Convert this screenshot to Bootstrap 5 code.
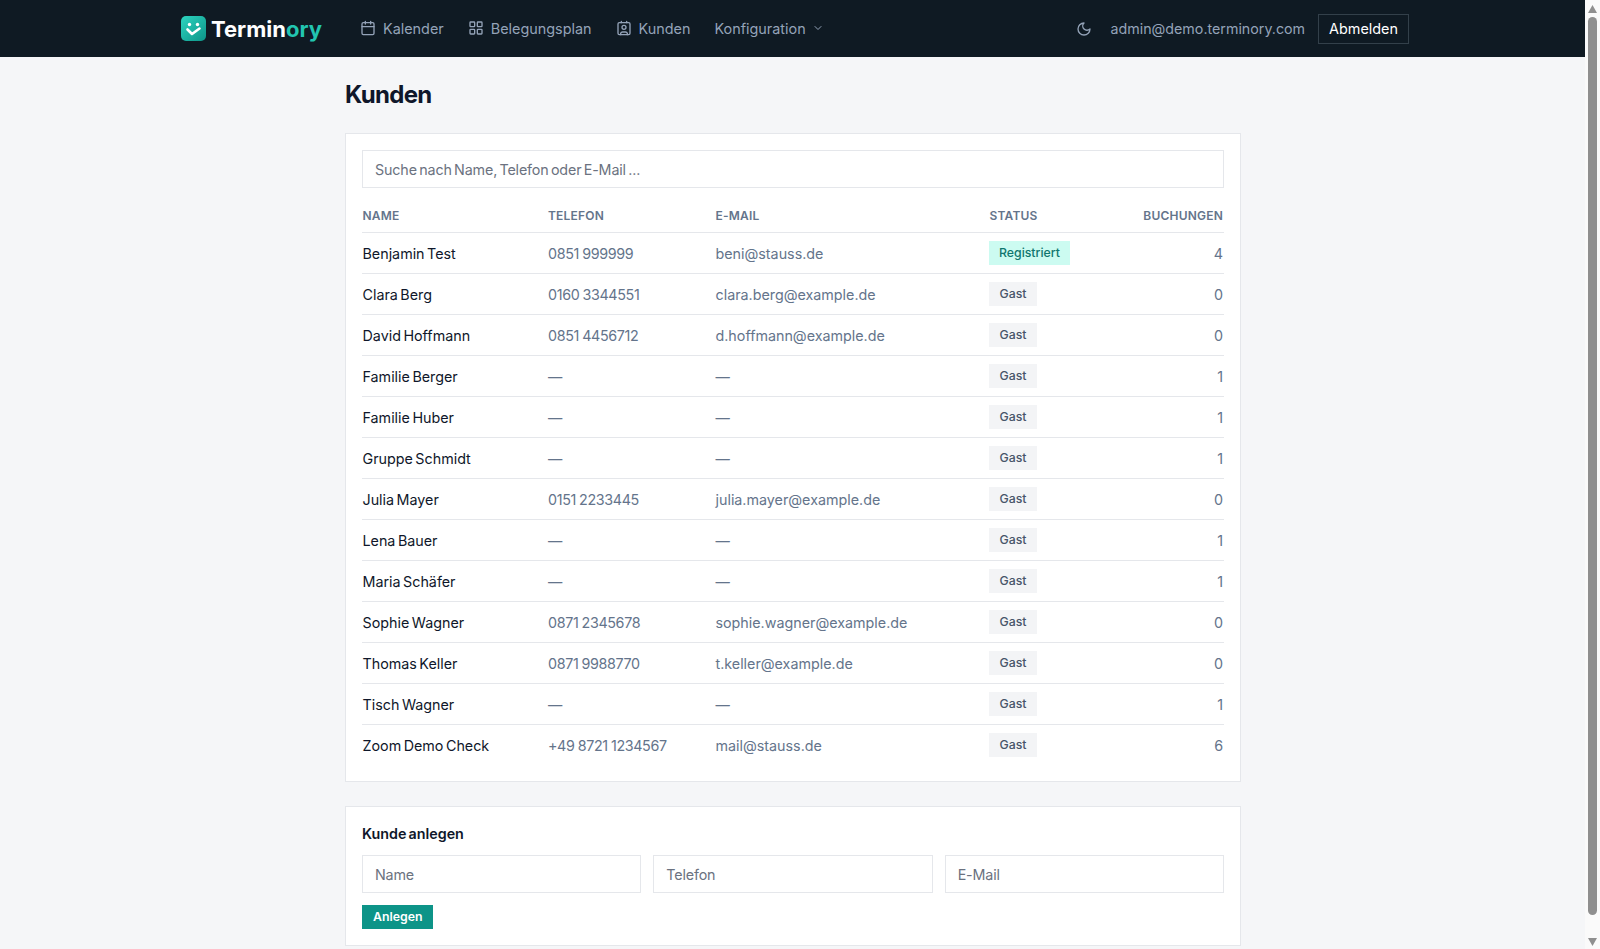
<!DOCTYPE html>
<html lang="de">

<head>
    <meta charset="UTF-8">
    <meta name="viewport" content="width=device-width, initial-scale=1.0">
    <title>Terminory - Kunden</title>
    <link href="https://cdn.jsdelivr.net/npm/bootstrap@5.3.0/dist/css/bootstrap.min.css" rel="stylesheet">
    <style>
        html {
            overflow: hidden;
        }

        body {
            background: #f5f6f8;
            color: #0f172a;
            font-family: "Inter", "Noto Sans", sans-serif;
            font-size: 14.3px;
            width: 1585px;
        }

        /* top bar */
        .topbar {
            background: #0f1a23;
            height: 57px;
            padding: 0;
            --bs-navbar-nav-link-padding-x: 0;
        }

        .topbar-inner {
            width: 1228px;
            margin-left: 181px;
        }

        .logo-word {
            font-size: 22px;
            font-weight: 700;
            color: #fff;
            text-decoration: none;
            line-height: 1;
            gap: 5px;
        }

        .logo-word span {
            color: #22c5b0;
        }

        .topnav {
            margin-left: 38px;
            gap: 24px;
        }

        .topnav .nav-link {
            color: #94a3b8;
            font-size: 14.4px;
            padding: 0;
            display: flex;
            align-items: center;
            gap: 7px;
        }

        .nav-ico {
            width: 16px;
            height: 16px;
            fill: none;
            stroke: #94a3b8;
            stroke-width: 2;
            stroke-linecap: round;
            stroke-linejoin: round;
        }

        .nav-ico.tiny {
            width: 12px;
            height: 12px;
            margin-left: -1px;
        }

        .user-mail {
            color: #94a3b8;
            font-size: 14.25px;
            margin-left: 18px;
        }

        .logout-btn {
            --bs-btn-color: #fff;
            --bs-btn-border-color: #33404a;
            --bs-btn-border-radius: 0;
            --bs-btn-padding-x: 10px;
            --bs-btn-padding-y: 0;
            --bs-btn-font-size: 14.4px;
            --bs-btn-font-weight: 400;
            height: 30px;
            margin-left: 13px;
        }

        /* page */
        .page-wrap {
            width: 896px;
            margin-left: 345px;
        }

        .page-title {
            font-size: 24px;
            font-weight: 700;
            line-height: 32px;
            margin: 22px 0 22px;
            letter-spacing: -0.7px;
        }

        .panel {
            --bs-card-border-radius: 0;
            --bs-card-inner-border-radius: 0;
            --bs-card-border-color: #e5e7eb;
            --bs-card-spacer-x: 16px;
            --bs-card-spacer-y: 16px;
            margin-bottom: 24px;
        }

        .panel .form-control {
            border-radius: 0;
            border-color: #e5e7eb;
            font-size: 14.3px;
            word-spacing: -1.5px;
            letter-spacing: -0.15px;
            height: 38px;
            padding: 0 12px;
            color: #0f172a;
        }

        .panel .form-control::placeholder {
            color: #6b7280;
        }

        .kunden-table {
            margin: 8px 0 0;
            table-layout: fixed;
            --bs-table-border-color: #e5e7eb;
        }

        .kunden-table th {
            font-size: 12px;
            font-weight: 600;
            color: #64748b;
            text-transform: uppercase;
            letter-spacing: 0.2px;
            padding: 5px 1px 0 0.5px;
            height: 36px;
            vertical-align: middle;
        }

        .kunden-table th:nth-child(2) {
            padding-left: 0;
        }

        .kunden-table td {
            height: 41px;
            padding: 3px 1px 0 0.5px;
            color: #64748b;
            vertical-align: middle;
            font-size: 14.3px;
            word-spacing: -1.5px;
        }

        .kunden-table td:nth-child(2) {
            letter-spacing: -0.35px;
            word-spacing: -0.5px;
            padding-left: 0;
        }

        .kunden-table td.state-cell {
            padding-top: 0;
            padding-left: 0;
        }

        .kunden-table tr:last-child td {
            border-bottom: 0;
            padding-top: 1px;
        }

        .kunden-table tr:last-child td.state-cell {
            padding-top: 0;
        }

        .kunden-table td.person {
            color: #0f172a;
        }

        .col-name {
            width: 186px;
        }

        .col-tel {
            width: 167px;
        }

        .col-mail {
            width: 274px;
        }

        .col-status {
            width: 120px;
        }

        .state-pill {
            display: inline-block;
            font-size: 12.3px;
            font-weight: 500;
            line-height: 24px;
            padding: 0 10.5px;
            background: #f3f4f6;
            color: #475569;
        }

        .state-pill.reg {
            padding: 0 10px;
            background: #ccfbf1;
            color: #0f766e;
        }

        .panel-title {
            font-size: 14.3px;
            font-weight: 600;
            word-spacing: -1.5px;
            line-height: 20px;
            margin: 1px 0 11px;
        }

        .add-row {
            gap: 12px;
            margin-bottom: 12px;
        }

        .add-btn {
            --bs-btn-bg: #0d9488;
            --bs-btn-color: #fff;
            --bs-btn-border-color: #0d9488;
            --bs-btn-border-radius: 0;
            --bs-btn-padding-x: 10px;
            --bs-btn-padding-y: 0;
            --bs-btn-font-size: 12.3px;
            --bs-btn-font-weight: 600;
            height: 24px;
            line-height: 22px;
        }

        /* window scrollbar */
        .fake-scroll {
            position: fixed;
            top: 0;
            right: 0;
            width: 15px;
            height: 949px;
            background: #fafafa;
        }

        .fake-scroll svg {
            position: absolute;
            left: 3px;
            width: 9px;
            height: 8px;
            fill: #8f8f8f;
        }

        .scroll-up {
            top: 5px;
        }

        .scroll-down {
            top: 938px;
        }

        .fake-thumb {
            position: absolute;
            left: 3px;
            top: 17px;
            width: 9px;
            height: 898px;
            border-radius: 5px;
            background: #8f8f8f;
        }
    </style>
</head>

<body>
    <nav class="navbar navbar-expand topbar">
        <div class="topbar-inner d-flex align-items-center justify-content-between">
            <div class="d-flex align-items-center">
                <a href="#" class="logo-word d-flex align-items-center">
                    <svg width="25" height="25" viewBox="0 0 25 25">
                        <defs>
                            <linearGradient id="logoGrad" x1="0" y1="0" x2="1" y2="1">
                                <stop offset="0" stop-color="#2dd4bf" />
                                <stop offset="1" stop-color="#0d9488" />
                            </linearGradient>
                        </defs>
                        <rect width="25" height="25" rx="5" fill="url(#logoGrad)" />
                        <circle cx="8.500" cy="8.500" r="1.700" fill="#fff" />
                        <circle cx="16.500" cy="8.500" r="1.700" fill="#fff" />
                        <path d="M6.500 13.500 11 18l7.500-5.500" fill="none" stroke="#fff" stroke-width="2.600" stroke-linecap="round" stroke-linejoin="round" />
                    </svg>
                    <div>Termin<span>ory</span></div>
                </a>
                <ul class="navbar-nav topnav">
                    <li class="nav-item">
                        <a class="nav-link" href="#">
                            <svg class="nav-ico" viewBox="0 0 24 24"><path d="M8 2v4M16 2v4" /><rect x="3" y="4" width="18" height="18" rx="2" /><path d="M3 10h18" /></svg>
                            Kalender
                        </a>
                    </li>
                    <li class="nav-item">
                        <a class="nav-link" href="#">
                            <svg class="nav-ico" viewBox="0 0 24 24"><rect x="3" y="3" width="7" height="7" rx="1" /><rect x="14" y="3" width="7" height="7" rx="1" /><rect x="14" y="14" width="7" height="7" rx="1" /><rect x="3" y="14" width="7" height="7" rx="1" /></svg>
                            Belegungsplan
                        </a>
                    </li>
                    <li class="nav-item">
                        <a class="nav-link" href="#">
                            <svg class="nav-ico" viewBox="0 0 24 24"><path d="M16 2v2M8 2v2" /><rect x="3" y="4" width="18" height="18" rx="2" /><circle cx="12" cy="11" r="3" /><path d="M7 22v-2a3 3 0 0 1 3-2h4a3 3 0 0 1 3 2v2" /></svg>
                            Kunden
                        </a>
                    </li>
                    <li class="nav-item">
                        <a class="nav-link" href="#">
                            Konfiguration
                            <svg class="nav-ico tiny" viewBox="0 0 24 24"><path d="m6 9 6 6 6-6" /></svg>
                        </a>
                    </li>
                </ul>
            </div>
            <div class="d-flex align-items-center">
                <svg class="nav-ico" viewBox="0 0 24 24"><path d="M12 3a6 6 0 0 0 9 9 9 9 0 1 1-9-9Z" /></svg>
                <span class="user-mail">admin@demo.terminory.com</span>
                <button type="button" class="btn logout-btn">Abmelden</button>
            </div>
        </div>
    </nav>

    <main class="page-wrap">
        <h1 class="page-title">Kunden</h1>

        <div class="card panel">
            <div class="card-body">
                <input type="text" class="form-control" placeholder="Suche nach Name, Telefon oder E-Mail ...">
                <table class="table kunden-table">
                    <thead>
                        <tr>
                            <th class="col-name">Name</th>
                            <th class="col-tel">Telefon</th>
                            <th class="col-mail">E-Mail</th>
                            <th class="col-status">Status</th>
                            <th class="text-end">Buchungen</th>
                        </tr>
                    </thead>
                    <tbody>
                        <tr>
                            <td class="person">Benjamin Test</td>
                            <td>0851 999999</td>
                            <td>beni@stauss.de</td>
                            <td class="state-cell"><span class="state-pill reg">Registriert</span></td>
                            <td class="text-end">4</td>
                        </tr>
                        <tr>
                            <td class="person">Clara Berg</td>
                            <td>0160 3344551</td>
                            <td>clara.berg@example.de</td>
                            <td class="state-cell"><span class="state-pill">Gast</span></td>
                            <td class="text-end">0</td>
                        </tr>
                        <tr>
                            <td class="person">David Hoffmann</td>
                            <td>0851 4456712</td>
                            <td>d.hoffmann@example.de</td>
                            <td class="state-cell"><span class="state-pill">Gast</span></td>
                            <td class="text-end">0</td>
                        </tr>
                        <tr>
                            <td class="person">Familie Berger</td>
                            <td>—</td>
                            <td>—</td>
                            <td class="state-cell"><span class="state-pill">Gast</span></td>
                            <td class="text-end">1</td>
                        </tr>
                        <tr>
                            <td class="person">Familie Huber</td>
                            <td>—</td>
                            <td>—</td>
                            <td class="state-cell"><span class="state-pill">Gast</span></td>
                            <td class="text-end">1</td>
                        </tr>
                        <tr>
                            <td class="person">Gruppe Schmidt</td>
                            <td>—</td>
                            <td>—</td>
                            <td class="state-cell"><span class="state-pill">Gast</span></td>
                            <td class="text-end">1</td>
                        </tr>
                        <tr>
                            <td class="person">Julia Mayer</td>
                            <td>0151 2233445</td>
                            <td>julia.mayer@example.de</td>
                            <td class="state-cell"><span class="state-pill">Gast</span></td>
                            <td class="text-end">0</td>
                        </tr>
                        <tr>
                            <td class="person">Lena Bauer</td>
                            <td>—</td>
                            <td>—</td>
                            <td class="state-cell"><span class="state-pill">Gast</span></td>
                            <td class="text-end">1</td>
                        </tr>
                        <tr>
                            <td class="person">Maria Schäfer</td>
                            <td>—</td>
                            <td>—</td>
                            <td class="state-cell"><span class="state-pill">Gast</span></td>
                            <td class="text-end">1</td>
                        </tr>
                        <tr>
                            <td class="person">Sophie Wagner</td>
                            <td>0871 2345678</td>
                            <td>sophie.wagner@example.de</td>
                            <td class="state-cell"><span class="state-pill">Gast</span></td>
                            <td class="text-end">0</td>
                        </tr>
                        <tr>
                            <td class="person">Thomas Keller</td>
                            <td>0871 9988770</td>
                            <td>t.keller@example.de</td>
                            <td class="state-cell"><span class="state-pill">Gast</span></td>
                            <td class="text-end">0</td>
                        </tr>
                        <tr>
                            <td class="person">Tisch Wagner</td>
                            <td>—</td>
                            <td>—</td>
                            <td class="state-cell"><span class="state-pill">Gast</span></td>
                            <td class="text-end">1</td>
                        </tr>
                        <tr>
                            <td class="person">Zoom Demo Check</td>
                            <td>+49 8721 1234567</td>
                            <td>mail@stauss.de</td>
                            <td class="state-cell"><span class="state-pill">Gast</span></td>
                            <td class="text-end">6</td>
                        </tr>
                    </tbody>
                </table>
            </div>
        </div>

        <div class="card panel">
            <div class="card-body">
                <h2 class="panel-title">Kunde anlegen</h2>
                <div class="d-flex add-row">
                    <div class="flex-fill w-100"><input type="text" class="form-control" placeholder="Name"></div>
                    <div class="flex-fill w-100"><input type="text" class="form-control" placeholder="Telefon"></div>
                    <div class="flex-fill w-100"><input type="text" class="form-control" placeholder="E-Mail"></div>
                </div>
                <button type="button" class="btn add-btn">Anlegen</button>
            </div>
        </div>
    </main>

    <div class="fake-scroll" aria-hidden="true">
        <svg class="scroll-up" viewBox="0 0 9 8"><path d="M4.500 0 9 8H0z" /></svg>
        <div class="fake-thumb"></div>
        <svg class="scroll-down" viewBox="0 0 9 8"><path d="M0 0h9L4.500 8z" /></svg>
    </div>

    <script src="https://cdn.jsdelivr.net/npm/bootstrap@5.3.0/dist/js/bootstrap.bundle.min.js"></script>
</body>

</html>
